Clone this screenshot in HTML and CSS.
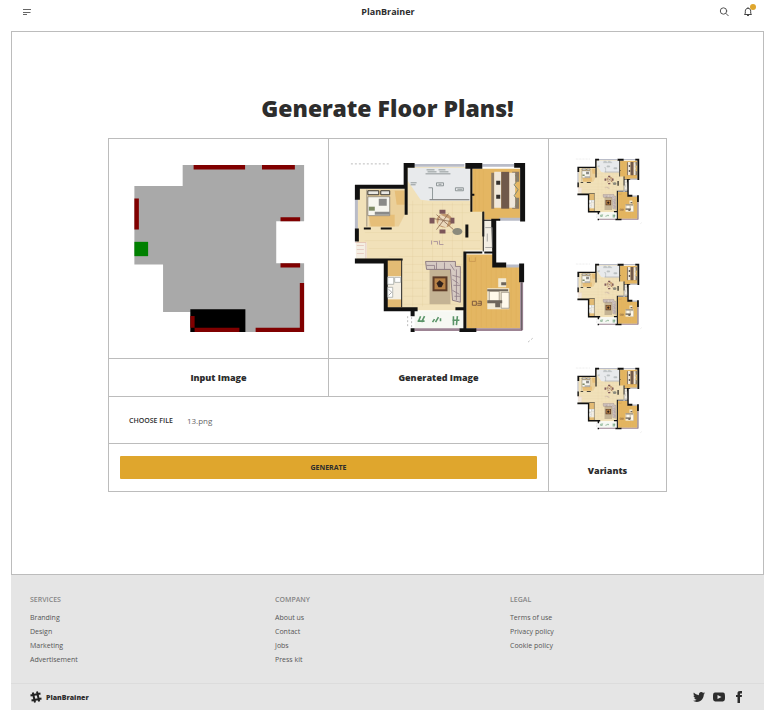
FILE: index.html
```html
<!DOCTYPE html>
<html lang="en">
<head>
<meta charset="utf-8">
<title>PlanBrainer</title>
<link rel="stylesheet" href="styles.css">
</head>
<body>
<svg class="defs" aria-hidden="true">
  <symbol id="plan" viewBox="0 0 220 220">
    <!-- floor areas -->
    <path fill="#f1e1b9" d="M78 28H144V72H156V112H137V172H56V122H28V50H78Z"/>
    <path fill="#ebd09a" d="M39 51H76V76L70 88H40Z"/>
    <path fill="#dfa850" opacity=".45" d="M40 76H66V88H42ZM66 52H76V66H68Z"/>
    <path fill="#e8eaec" d="M79 29H142V62H101L92 61L79 42Z"/>
    <path fill="#e4b662" d="M144 30H192V81H156V73H144ZM138 116H165V128H192V190H138Z"/>
    <path fill="#e3bb74" d="M58 121H73V138H58ZM58 161H73V169H58Z"/>
    <path fill="#f4efe4" d="M58 138H73V161H58ZM27 104H38V120H27ZM156 81H165V112H156Z"/>
    <path fill="#f6f8f3" d="M86 173H136V190H86Z"/>
    <!-- wood grain -->
    <path stroke="#d6a14b" stroke-width=".4" opacity=".5" fill="none" d="M147 31V72M151 31V72M155 31V78M143 118V189M148 118V189M153 118V189M158 118V189M163 118V189M168 129V189M173 129V189M178 129V189M183 129V189M188 129V189"/>
    <path stroke="#dcc894" stroke-width=".4" fill="none" opacity=".6" d="M80 66H142M80 74H142M36 94H152M36 102H152M40 110H152M60 118H134M75 126H134M75 134H134M75 142H98M75 150H98M75 158H98M75 166H134M84 62V168M94 62V168M104 64V140M114 64V140M124 64V140M134 64V168"/>
    <!-- windows -->
    <path fill="#b9bcc8" d="M85 25H136V28H85ZM154 25H186V28H154ZM26 60H29V91H26ZM171 79H192V82H171ZM178 126H191V129H178Z"/>
    <path fill="#9d8494" d="M86 190H131V193H86ZM147 190H194V193H147ZM192 144H195V192H192Z"/>
    <path stroke="#dba7a0" stroke-width=".5" fill="none" d="M26 104H37V121M28 107H35M28 111H35M28 115H35"/>
    <!-- walls -->
    <path fill="#111" d="M75 24H86V29H79V50H31V61H26V46H75ZM137 24H154V30H137ZM186 24H197V83H192V29H186ZM76 50H79V76H76ZM26 90H30V103H26ZM26 120H74V122H59V169H89V173H55V125H26ZM82 172H86V178H82ZM82 190H86V194H82ZM142 29H144V73H142ZM142 55H146V57H142ZM154 73H156V81H165V89H163V82H156V98H154ZM163 80H172V82H168V124H178V129H164V115H156V113H164ZM135 113H154V115H138V190H148V194H131V190H135ZM191 125H196V144H191ZM35 89H42V91H35ZM52 89H63V91H52ZM137 86H140V99H137ZM127 169H136V172H127Z"/>
    <path fill="none" stroke="#222" stroke-width="1" d="M73 121V169M155 73V113"/>
    <path fill="none" stroke="#555" stroke-width=".8" d="M101 61H141M193.500 144V192"/>
    <!-- left bedroom -->
    <path fill="#e9e8e3" stroke="#38352f" stroke-width="1" d="M39 52H50V56H39ZM52 52H61V56H52Z"/>
    <path fill="#f7f6ef" stroke="#77726a" stroke-width=".7" d="M38 51V88M39 58H61V77H39Z"/>
    <path fill="#8a8a88" d="M50 60H58V67H50ZM46 73H61V76H46Z"/>
    <path fill="#7d8a63" d="M40 68H46V72H40Z"/>
    <!-- upper right bedroom -->
    <path fill="#8d7a65" d="M163 34H166V70H163ZM184 33H191V43H184ZM184 59H191V70H184Z"/>
    <path fill="#efe7da" d="M166 33H173V69H166ZM181 34H187V69H181Z"/>
    <path fill="#70594b" d="M173 33H181V70H173Z"/>
    <path fill="#34302d" d="M168 42H172V46H168ZM168 56H172V60H168Z"/>
    <path fill="none" stroke="#7d8672" stroke-width="1" d="M187 36L190 41L186 46L190 51L186 57L190 62L187 68"/>
    <!-- terrace furniture -->
    <path fill="none" stroke="#7b8384" stroke-width=".8" d="M97 35H122M99 33H108M111 33H120M98 31H106M110 31H117M82 44H88M82 46H87M100 49H104V61M108 44H115V47H108ZM127 49H135V52H127ZM110 45.500H113M129 50.500H134"/>
    <!-- dining set -->
    <ellipse cx="116" cy="82" rx="8" ry="7" fill="#c39a70"/>
    <path fill="#7d575a" d="M111 71H117V75H111ZM111 91H117V95H111ZM101 79H106V85H101ZM122 79H126V85H122Z"/>
    <path fill="#ead8bc" d="M112 76L121 80L118 89L109 86Z"/>
    <path stroke="#8a6850" fill="none" stroke-width=".8" d="M108 76L125 91M120 75L108 91M105 80L123 83"/>
    <ellipse cx="129" cy="93" rx="5" ry="3.500" fill="#8b8a7c"/>
    <path stroke="#a08898" stroke-width=".8" fill="none" d="M103 102V106M105 103H109V106M111 102V106H115"/>
    <!-- sofa and rug -->
    <path fill="#c4b394" d="M101 130H122V166H101Z"/>
    <path fill="#5d3c28" d="M104 138H119V153H104Z"/>
    <path fill="#b98347" d="M106 140H117V151H106Z"/>
    <path fill="#30211b" d="M108 145L111 142L115 145L113 149H110Z"/>
    <path fill="#d6cac3" stroke="#7c6974" stroke-width=".8" d="M97 123H127V128H132V164L124 162L122 131H98Z"/>
    <path fill="none" stroke="#8d7a84" stroke-width=".8" d="M98 127H106V131M108 124V131M116 124V131M122 126L126 132M124 137L132 139M124 141L130 145M125 147H132M124 152L131 156M126 158H132M128 131V162"/>
    <!-- kitchen and laundry -->
    <path fill="#fff" stroke="#9aa09d" stroke-width=".7" d="M59 139H65V146H59ZM66 139H72V144H66ZM59 149H64V159H59Z"/>
    <path fill="none" stroke="#888" stroke-width=".7" d="M60 151L63 154L60 157M157 89H164V109H157M159 95V103"/>
    <!-- lower right bedroom -->
    <path fill="#f2ead5" d="M159 150H181V171H159ZM170 140H178V149H170Z"/>
    <path fill="#fff9eb" stroke="#8c8172" stroke-width=".7" d="M161 153H171V163H161ZM173 154H181V170H173Z"/>
    <path fill="#6e665c" d="M159 151H180V153H159ZM159 162H174V165H159ZM167 165H172V169H167ZM173 144H178V147H173Z"/>
    <path fill="none" stroke="#72513c" stroke-width=".9" d="M144 163H148V167H144ZM150 163H153V167H149M149 165H153"/>
    <path fill="none" stroke="#c99650" stroke-width=".8" d="M141 119V123H147V119"/>
    <!-- balcony plants -->
    <path fill="none" stroke="#5a9468" stroke-width="1.600" d="M90 183L92 178M93 184L96 178M89 183H96M104 184L106 181M107 184L110 179M112 183V180M125 178V187M129 178L128 187M124 182H131"/>
    <path fill="none" stroke="#bbb" stroke-width="1" stroke-dasharray="2 2" d="M79 178V190M83 179V190M22 25H62M200 204L206 199"/>
  </symbol>
</svg>

<header class="topbar">
  <button class="icon-button" aria-label="Menu">
    <svg width="8" height="8" viewBox="0 0 8 8"><path d="M0 1.500H8M0 4.500H7.500M0 6.500H4" stroke="#666" fill="none"/></svg>
  </button>
  <a class="brand" href="#">PlanBrainer</a>
  <div class="actions">
    <button class="icon-button" aria-label="Search">
      <svg width="10" height="10" viewBox="0 0 10 10" fill="none" stroke="#555" stroke-linecap="round"><circle cx="4.500" cy="4" r="3.200"/><path d="M7 6.500L9.300 8.800"/></svg>
    </button>
    <button class="icon-button" aria-label="Notifications">
      <svg width="10" height="10" viewBox="0 0 10 10" fill="none" stroke="#444" stroke-linejoin="round"><path d="M1.500 7.500H8.500L7.700 6.200V4.200C7.700 2.500 6.700 1.300 5 1.300S2.300 2.500 2.300 4.200V6.200ZM4 8.200Q5 9.600 6 8.200M5 .3V1.300"/></svg>
      <span class="badge"></span>
    </button>
  </div>
</header>

<main class="stage">
  <h1>Generate Floor Plans!</h1>
  <section class="board">
    <div class="left">
      <div class="pair">
        <figure>
          <svg class="picture" viewBox="0 0 220 220" role="img" aria-label="Input">
            <path fill="#a9a9a9" d="M74 26H196V82.700H168V124.700H196V194H82V173.700H54.300V126H25.500V47.300H74Z"/>
            <path fill="#000" d="M81.700 171H137V194H81.700Z"/>
            <path fill="#800000" d="M85 26H136.700V30.600H85ZM153.700 26H186.700V30.600H153.700ZM25.500 59.700H30V91H25.500ZM172.300 78.500H192V82.700H172.300ZM172.300 124.700H192V129H172.300ZM191.700 144.700H196V194H147.300V189.700H191.700ZM81.700 177.700H86V189.700H131V194H86V189.700H81.700Z"/>
            <path fill="#008000" d="M25.500 103.300H39.300V117.700H25.500Z"/>
          </svg>
          <figcaption>Input Image</figcaption>
        </figure>
        <figure>
          <svg class="picture" viewBox="0 0 220 220" role="img" aria-label="Generated"><use href="#plan"/></svg>
          <figcaption>Generated Image</figcaption>
        </figure>
      </div>
      <div class="file-row">
        <input class="file-input" type="file" id="file">
        <label class="file-button" for="file">CHOOSE FILE</label>
        <span class="file-name">13.png</span>
      </div>
      <div class="submit-row"><button class="generate">GENERATE</button></div>
    </div>
    <aside class="variants">
      <svg class="thumb" viewBox="0 0 220 220"><use href="#plan"/></svg>
      <svg class="thumb" viewBox="0 0 220 220"><use href="#plan"/></svg>
      <svg class="thumb" viewBox="0 0 220 220"><use href="#plan"/></svg>
      <h2>Variants</h2>
    </aside>
  </section>
</main>

<footer class="footer">
  <div class="links">
    <nav><h3>SERVICES</h3><a href="#">Branding</a><a href="#">Design</a><a href="#">Marketing</a><a href="#">Advertisement</a></nav>
    <nav><h3>COMPANY</h3><a href="#">About us</a><a href="#">Contact</a><a href="#">Jobs</a><a href="#">Press kit</a></nav>
    <nav><h3>LEGAL</h3><a href="#">Terms of use</a><a href="#">Privacy policy</a><a href="#">Cookie policy</a></nav>
  </div>
  <div class="bottom">
    <a class="mark" href="#">
      <svg width="12" height="12" viewBox="0 0 12 12" fill="none" stroke="#222" stroke-width="2"><path d="M2.800 1.500L5 11.500M7 .5L9.200 10.500M.5 4.600L10.500 2.400M1.500 9.600L11.500 7.400"/></svg>
      <span>PlanBrainer</span>
    </a>
    <div class="social">
      <a href="#" aria-label="Twitter"><svg width="12" height="12" viewBox="0 0 24 24" fill="#2d2d2d"><path d="M24 4.557c-.883.392-1.832.656-2.828.775 1.017-.609 1.798-1.574 2.165-2.724-.951.564-2.005.974-3.127 1.195-.897-.957-2.178-1.555-3.594-1.555-3.179 0-5.515 2.966-4.797 6.045-4.091-.205-7.719-2.165-10.148-5.144-1.290 2.213-.669 5.108 1.523 6.574-.806-.026-1.566-.247-2.229-.616-.054 2.281 1.581 4.415 3.949 4.890-.693.188-1.452.232-2.224.084.626 1.956 2.444 3.379 4.600 3.419-2.070 1.623-4.678 2.348-7.290 2.040 2.179 1.397 4.768 2.212 7.548 2.212 9.142 0 14.307-7.721 13.995-14.646.962-.695 1.797-1.562 2.457-2.549z"/></svg></a>
      <a href="#" aria-label="YouTube"><svg width="12" height="12" viewBox="0 0 24 24" fill="#2d2d2d"><path fill-rule="evenodd" d="M19.600 3.200C15.900 2.900 8 2.900 4.400 3.200.5 3.500 0 5.800 0 12s.5 8.500 4.400 8.800c3.600.3 11.500.3 15.200 0C23.500 20.500 24 18.200 24 12s-.5-8.500-4.400-8.800zM9 16V8l8 4z"/></svg></a>
      <a href="#" aria-label="Facebook"><svg width="12" height="12" viewBox="0 0 24 24" fill="#2d2d2d"><path d="M9 8H6v4h3v12h5V12h3.600l.4-4h-4V6.300c0-.9.200-1.300 1.100-1.300H18V0h-3.800C10.600 0 9 1.600 9 4.600V8z"/></svg></a>
    </div>
  </div>
</footer>
</body>
</html>
```
FILE: styles.css
```css
* { box-sizing: border-box; }

body {
  margin: 0 13px 0 11px;
  background: #fff;
  color: #2d2d2d;
  font-family: "Open Sans", "Noto Sans", sans-serif;
  font-size: 7px;
}

a { color: inherit; text-decoration: none; }
button { font: inherit; color: inherit; border: 0; background: none; padding: 0; }
h1, h2, h3, figure { margin: 0; }
svg { display: block; }
.defs { position: absolute; width: 0; height: 0; }

.topbar {
  display: grid;
  grid-template-columns: 1fr auto 1fr;
  align-items: center;
  height: 31px;
  padding: 0 11px 7px 12px;
}
.brand { font-size: 9px; font-weight: 700; line-height: 12px; }
.actions { display: flex; justify-content: flex-end; gap: 14px; }
.icon-button { position: relative; justify-self: start; }
.badge {
  position: absolute;
  top: -3px;
  right: -3px;
  width: 6px;
  height: 6px;
  border-radius: 50%;
  background: #dfa62d;
}

.stage {
  border: 1px solid #bcbcbc;
  padding: 60px 96px 82px;
}
h1 {
  padding-bottom: 14px;
  text-align: center;
  font-family: "Noto Sans", "Open Sans", sans-serif;
  font-size: 23px;
  font-weight: 900;
  line-height: 32px;
}

.board {
  display: grid;
  grid-template-columns: minmax(0, 440fr) minmax(0, 117fr);
  border: 1px solid #bcbcbc;
}
.left { border-right: 1px solid #bcbcbc; }
.pair {
  display: grid;
  grid-template-columns: 1fr 1fr;
  gap: 1px;
  background: #bcbcbc;
}
.pair figure { background: #fff; }
.picture { width: 100%; }
figcaption, h2 {
  font-size: 9px;
  font-weight: 800;
  line-height: 14px;
  text-align: center;
}
figcaption { padding: 12px 0 11px; border-top: 1px solid #bcbcbc; }

.file-row {
  display: flex;
  align-items: center;
  gap: 14px;
  height: 47px;
  padding-left: 20px;
  border-top: 1px solid #bcbcbc;
}
.file-input { position: absolute; width: 1px; height: 1px; opacity: 0; }
.file-button { font-size: 7px; font-weight: 600; }
.file-name { font-size: 8px; color: #666; }
.submit-row { padding: 12px 11px; border-top: 1px solid #bcbcbc; }
.generate {
  width: 100%;
  height: 23px;
  border-radius: 1px;
  background: #dfa62d;
  font-size: 7px;
  font-weight: 700;
}

.variants {
  display: flex;
  flex-direction: column;
  align-items: center;
  gap: 25px;
  padding-top: 11px;
}
.thumb { width: 68%; }

.footer { background: #e5e5e5; }
.links {
  display: grid;
  grid-template-columns: 245fr 235fr 254fr;
  padding: 18px 0 16px 19px;
}
nav { display: flex; flex-direction: column; align-items: flex-start; line-height: 14px; }
h3 { padding-bottom: 4px; font-size: 7px; font-weight: 600; color: #858585; line-height: 14px; }
nav a { color: #555; }
.bottom {
  display: flex;
  justify-content: space-between;
  align-items: center;
  height: 27px;
  padding: 0 19px;
  border-top: 1px solid #dcdcdc;
}
.mark { display: flex; align-items: center; gap: 4px; font-weight: 800; }
.social { display: flex; gap: 8px; }
```
